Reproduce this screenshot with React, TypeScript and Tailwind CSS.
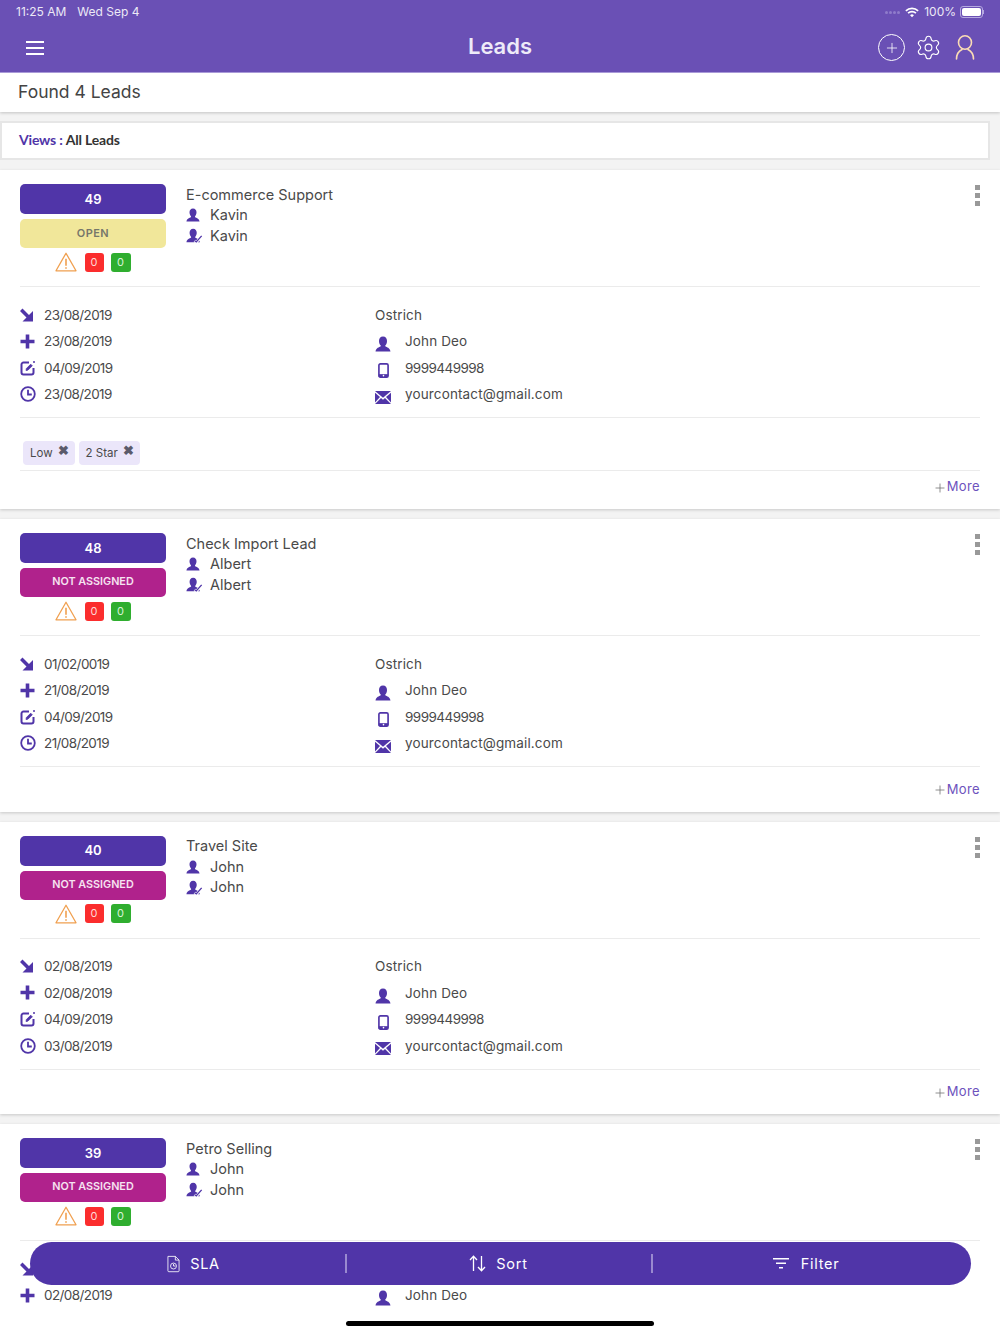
import React from 'react';
import { Plus, Settings } from 'lucide-react';

type Lead = {
  id: number;
  status: string;
  title: string;
  name: string;
  dates: string[];
  tags?: string[];
  // the last card runs under the bottom edge, only this many rows of it show
  rows?: number;
};

const leads: Lead[] = [
  { id: 49, status: 'OPEN', title: 'E-commerce Support', name: 'Kavin', dates: ['23/08/2019', '23/08/2019', '04/09/2019', '23/08/2019'], tags: ['Low', '2 Star'] },
  { id: 48, status: 'NOT ASSIGNED', title: 'Check Import Lead', name: 'Albert', dates: ['01/02/0019', '21/08/2019', '04/09/2019', '21/08/2019'] },
  { id: 40, status: 'NOT ASSIGNED', title: 'Travel Site', name: 'John', dates: ['02/08/2019', '02/08/2019', '04/09/2019', '03/08/2019'] },
  { id: 39, status: 'NOT ASSIGNED', title: 'Petro Selling', name: 'John', dates: ['02/08/2019', '02/08/2019', '04/09/2019', '03/08/2019'], rows: 2 },
];

const personPath =
  'M8 .5c2.600 0 4 2 4 4.400 0 2-.8 3.600-1.600 4.400-.3.5-.2 1 .2 1.300 1 .8 4.400 1.200 4.900 4.900H.5c.5-3.700 3.900-4.100 4.900-4.900.4-.3.5-.8.2-1.300C4.800 8.500 4 6.900 4 4.900 4 2.500 5.400.5 8 .5z';

const PersonIcon = ({ className }: { className?: string }) => (
  <svg viewBox="0 0 16 16" className={className} fill="#5035a8">
    <path d={personPath} />
  </svg>
);

const AssignedIcon = ({ className }: { className?: string }) => (
  <svg viewBox="0 0 19 16" className={className} fill="#5035a8">
    <path d={personPath} />
    <path d="M9.500 14l2 1.600 6-7" fill="none" stroke="#fff" strokeWidth="3" />
    <path d="M9.800 13.800l1.700 1.400 6-6.800" fill="none" stroke="#5035a8" strokeWidth="1.500" />
  </svg>
);

const ArrowIcon = () => (
  <svg viewBox="0 0 14 14" className="w-[14px] h-[14px]" fill="#5035a8">
    <path d="M2.500 .5L9 7 13 3V13.500H2.500L6.500 9.500 0 3z" />
  </svg>
);

const CrossIcon = () => (
  <svg viewBox="0 0 15 15" className="w-[15px] h-[15px]" fill="#5035a8">
    <path d="M5.700 0.500h3.600v5.200h5.200v3.600H9.300v5.200H5.700V9.300H.5V5.700h5.200z" />
  </svg>
);

const EditIcon = () => (
  <svg viewBox="0 0 16 16" className="w-[16px] h-[16px]" fill="none" stroke="#5035a8" strokeWidth="2">
    <path d="M9 2.500H3.500a2 2 0 0 0-2 2v8a2 2 0 0 0 2 2h8a2 2 0 0 0 2-2V8" />
    <path d="M6 10.500l.4-2 4.300-4.300 1.600 1.600L8 10.100z" fill="#5035a8" strokeWidth="0.800" />
    <circle cx="14" cy="2" r="1" fill="#5035a8" stroke="none" />
  </svg>
);

const ClockIcon = () => (
  <svg viewBox="0 0 16 16" className="w-[16px] h-[16px]" fill="none" stroke="#5035a8" strokeWidth="1.800">
    <circle cx="8" cy="8" r="6.800" />
    <path d="M8 3.800V8.500H11.800" />
  </svg>
);

const PhoneIcon = () => (
  <svg viewBox="0 0 12 16" className="w-[11px] h-[15px]">
    <rect x="1" y="0.800" width="10" height="14.400" rx="1.600" fill="none" stroke="#5035a8" strokeWidth="1.800" />
    <rect x="1" y="12" width="10" height="3.200" fill="#5035a8" />
    <circle cx="6" cy="13.600" r="0.900" fill="#fff" />
  </svg>
);

const MailIcon = () => (
  <svg viewBox="0 0 16 13" className="w-[16px] h-[13px]" fill="#5035a8">
    <path d="M0 0h16L8 6.800z" />
    <path d="M0 1.800L5 6 0 11.500z" />
    <path d="M16 1.800L11 6l5 5.500z" />
    <path d="M0 13l6-6 2 1.700L10 7l6 6z" />
  </svg>
);

const WarningIcon = () => (
  <svg viewBox="0 0 22 20" className="w-[22px] h-[20px]" fill="none" stroke="#f0a050" strokeWidth="1.300" strokeLinejoin="round">
    <path d="M11 1.200L21 18.800H1z" />
    <path d="M11 6.800v7M11 15.200v1.500" strokeWidth="1.600" />
  </svg>
);

const WifiIcon = () => (
  <svg viewBox="0 0 16 12" className="w-[14px] h-[11px]" fill="none" stroke="#fff" strokeWidth="1.900">
    <path d="M1 4.200a10 10 0 0 1 14 0" />
    <path d="M3.500 6.800a6.400 6.400 0 0 1 9 0" />
    <path d="M8 11.500L5.800 9.200a3 3 0 0 1 4.400 0z" fill="#fff" stroke="none" />
  </svg>
);

const ProfileIcon = () => (
  <svg viewBox="0 0 20 25" className="w-[20px] h-[25px]" fill="none" stroke="#fbdcb4" strokeWidth="1.600" strokeLinecap="round">
    <ellipse cx="10" cy="7.500" rx="6.500" ry="6.700" />
    <path d="M1.500 24c0-5.500 2.500-8 5.500-9.500M18.500 24c0-5.500-2.500-8-5.500-9.500" />
  </svg>
);

const SlaIcon = () => (
  <svg viewBox="0 0 14 18" className="w-[13px] h-[18px]" fill="none" stroke="#fff" strokeWidth="0.900">
    <path d="M1 .8h8l4 4v11.500a1 1 0 0 1-1 1H2a1 1 0 0 1-1-1z" />
    <path d="M9 .8v4h4" />
    <circle cx="7" cy="11.200" r="3.200" />
    <path d="M7 9v2.200h2.200" />
  </svg>
);

const SortIcon = () => (
  <svg viewBox="0 0 17 17" className="w-[17px] h-[17px]" fill="none" stroke="#fff" strokeWidth="1.300">
    <path d="M4.500 16V1.500M1 5l3.500-3.800L8 5" />
    <path d="M12.500 1v14.500M9 12l3.500 3.800L16 12" />
  </svg>
);

const FilterIcon = () => (
  <svg viewBox="0 0 16 11" className="w-[16px] h-[11px]" fill="#fff">
    <rect x="0" y="0" width="16" height="1.500" />
    <rect x="3" y="4.500" width="10" height="1.500" />
    <rect x="6" y="9" width="4" height="1.500" />
  </svg>
);

const LeadCard = ({ lead }: { lead: Lead }) => {
  const dateIcons = [<ArrowIcon />, <CrossIcon />, <EditIcon />, <ClockIcon />];
  const contact = [
    { icon: <PersonIcon className="w-[16px] h-[16px]" />, text: 'John Deo', numeric: false },
    { icon: <PhoneIcon />, text: '9999449998', numeric: true },
    { icon: <MailIcon />, text: 'yourcontact@gmail.com', numeric: false },
  ];
  const dates = lead.rows ? lead.dates.slice(0, lead.rows) : lead.dates;
  const contactRows = lead.rows ? contact.slice(0, lead.rows - 1) : contact;

  return (
    <div className="bg-white mb-[10px] shadow-[0_1px_3px_rgba(0,0,0,0.18)]">
      <div className="relative px-[20px] pt-[14px]">
        <div className="flex h-[102px]">
          <div className="w-[146px] flex flex-col items-center">
            <div className="w-full h-[30px] pt-[1px] rounded-[5px] bg-[#5035a8] text-white text-[13px] font-semibold flex items-center justify-center">
              {lead.id}
            </div>
            <div
              className={`w-full h-[29px] mt-[5px] rounded-[5px] font-semibold flex items-center justify-center ${
                lead.status === 'OPEN'
                  ? 'bg-[#f1e79a] text-[#77776a] text-[11px] tracking-[0.04em]'
                  : 'bg-[#b0228c] text-[#f6e3f1] text-[10.800px]'
              }`}
            >
              {lead.status}
            </div>
            <div className="flex items-center mt-[4px] h-[20px]">
              <div className="-ml-[1px] flex items-center">
                <WarningIcon />
              </div>
              <div className="w-[19px] h-[19px] ml-[8px] rounded-[3px] bg-[#fb2d2d] text-[#ffd9d9] text-[11px] flex items-center justify-center">0</div>
              <div className="w-[20px] h-[19px] ml-[7px] rounded-[3px] bg-[#2fae2f] text-[#d9f3d9] text-[11px] flex items-center justify-center">0</div>
            </div>
          </div>
          <div className="ml-[20px] pt-[0.500px] text-[#4a4a4a] text-[14.500px] leading-[20.500px]">
            <div>{lead.title}</div>
            <div className="flex items-center">
              <PersonIcon className="w-[14px] h-[14px]" />
              <span className="ml-[10px]">{lead.name}</span>
            </div>
            <div className="flex items-center">
              <AssignedIcon className="w-[17px] h-[15px]" />
              <span className="ml-[7px]">{lead.name}</span>
            </div>
          </div>
        </div>
        <div className="absolute right-[20px] top-[15px] flex flex-col gap-[3px]">
          <div className="w-[5px] h-[5px] bg-[#999999]" />
          <div className="w-[5px] h-[5px] bg-[#999999]" />
          <div className="w-[5px] h-[5px] bg-[#999999]" />
        </div>

        <div className="border-t border-[#ebebeb] pt-[14.500px] pb-[9.500px] flex text-[13.500px] text-[#4a4a4a] tracking-[0.01em]">
          <div className="w-[355px] flex flex-col">
            {dates.map((date, i) => (
              <div key={i} className="h-[26.500px] flex items-center">
                <div className="w-[24px] flex items-center">{dateIcons[i]}</div>
                <span className="tracking-[-0.6px]">{date}</span>
              </div>
            ))}
          </div>
          <div className="flex flex-col">
            <div className="h-[26.500px] flex items-center">Ostrich</div>
            {contactRows.map((row) => (
              <div key={row.text} className="h-[26.500px] flex items-center">
                <div className="w-[16px] mr-[14px] flex items-center justify-center translate-y-[3px]">{row.icon}</div>
                <span className={row.numeric ? 'tracking-[-0.55px]' : ''}>{row.text}</span>
              </div>
            ))}
          </div>
        </div>

        {lead.tags && (
          <div className="border-t border-[#ebebeb] h-[53px] flex items-start pt-[23px] pl-[3px] gap-[4px]">
            {lead.tags.map((tag) => (
              <div key={tag} className="h-[24px] pt-[1px] pl-[7px] pr-[6px] rounded-[4px] bg-[#ebe6fa] text-[#4a4a4a] text-[11.500px] flex items-center">
                <span>{tag}</span>
                <span className="ml-[5px] -mt-[5px] text-[#5b5b6b] text-[12.500px] font-bold leading-none">✖</span>
              </div>
            ))}
          </div>
        )}

        {!lead.rows && (
          <div
            className={`border-t border-[#ebebeb] flex items-center justify-end text-[13px] text-[#6d52bd] tracking-[0.03em] ${
              lead.tags ? 'h-[39px] pb-[6px]' : 'h-[45.500px]'
            }`}
          >
            <Plus size={14} strokeWidth={1.300} className="text-[#6e6e6e] mt-[2px]" />
            <span>More</span>
          </div>
        )}
      </div>
    </div>
  );
};

export default function App() {
  return (
    <div className="relative w-[1000px] h-[1334px] overflow-hidden bg-white font-['Inter',sans-serif]">
      {/* Status + nav bar */}
      <div className="bg-[#6a50b5] h-[73px] text-white border-b border-[#a99ad8]">
        <div className="h-[24px] px-[16px] flex items-center justify-between text-[12px] text-[#ece9f6]">
          <div className="flex gap-[11px]">
            <span>11:25 AM</span>
            <span>Wed Sep 4</span>
          </div>
          <div className="flex items-center">
            <div className="flex gap-[1px] mr-[5px]">
              {[0, 1, 2, 3].map((d) => (
                <div key={d} className="w-[3px] h-[3px] rounded-full bg-[#8f7ccb]" />
              ))}
            </div>
            <WifiIcon />
            <span className="ml-[5px]">100%</span>
            <div className="ml-[4px] w-[23px] h-[12px] rounded-[3px] border border-[#b5a8e0] p-[1px]">
              <div className="w-full h-full rounded-[2px] bg-white" />
            </div>
            <div className="w-[1px] h-[4px] bg-[#b5a8e0]" />
          </div>
        </div>
        <div className="h-[47px] relative flex items-center justify-center">
          <div className="absolute left-[26px] top-[17px] flex flex-col gap-[4px]">
            <div className="w-[18px] h-[2px] bg-white" />
            <div className="w-[18px] h-[2px] bg-white" />
            <div className="w-[18px] h-[2px] bg-white" />
          </div>
          <span className="text-[22px] font-semibold text-[#eeebf8] -mt-[2px]">Leads</span>
          <div className="absolute right-[25px] top-[10px] flex items-center gap-[13px]">
            <div className="w-[27px] h-[27px] -mr-[3px] rounded-full border-[1.500px] border-white flex items-center justify-center">
              <Plus size={16} strokeWidth={1.200} />
            </div>
            <Settings size={27} strokeWidth={1} className="text-white" />
            <ProfileIcon />
          </div>
        </div>
      </div>

      <div className="h-[1237px] overflow-hidden bg-[#f3f3f3]">
        {/* Found count */}
        <div className="bg-white h-[39px] px-[18px] flex items-center text-[17.500px] text-[#444] shadow-[0_1px_3px_rgba(0,0,0,0.2)]">
          Found 4 Leads
        </div>

        {/* Views */}
        <div className="mt-[9px] mr-[10px] h-[39px] pb-[2px] bg-white border-2 border-[#e6e6e6] pl-[17px] flex items-center text-[14px] tracking-[-0.2px] font-bold font-['Lato',sans-serif]">
          <span className="text-[#5035a8]">Views :&nbsp;</span>
          <span className="text-[#333]">All Leads</span>
        </div>

        <div className="mt-[10px]">
          {leads.map((lead) => (
            <LeadCard key={lead.id} lead={lead} />
          ))}
        </div>
      </div>

      {/* Bottom action bar */}
      <div className="absolute left-[30px] top-[1242px] w-[941px] h-[43px] rounded-[22px] bg-[#5035a8] flex items-center text-white text-[14.500px] tracking-[0.05em]">
        <div className="w-[315px] flex items-center justify-center gap-[10px] pl-[12px]">
          <SlaIcon />
          <span>SLA</span>
        </div>
        <div className="w-[2px] h-[19px] bg-[#9a8ad0]" />
        <div className="w-[304px] flex items-center justify-center gap-[10px] pr-[1px]">
          <SortIcon />
          <span>Sort</span>
        </div>
        <div className="w-[2px] h-[19px] bg-[#9a8ad0]" />
        <div className="flex-1 flex items-center justify-center gap-[12px] pr-[12px]">
          <FilterIcon />
          <span>Filter</span>
        </div>
      </div>

      {/* Home indicator */}
      <div className="absolute left-[346px] top-[1321px] w-[308px] h-[5px] rounded-full bg-black" />
    </div>
  );
}
